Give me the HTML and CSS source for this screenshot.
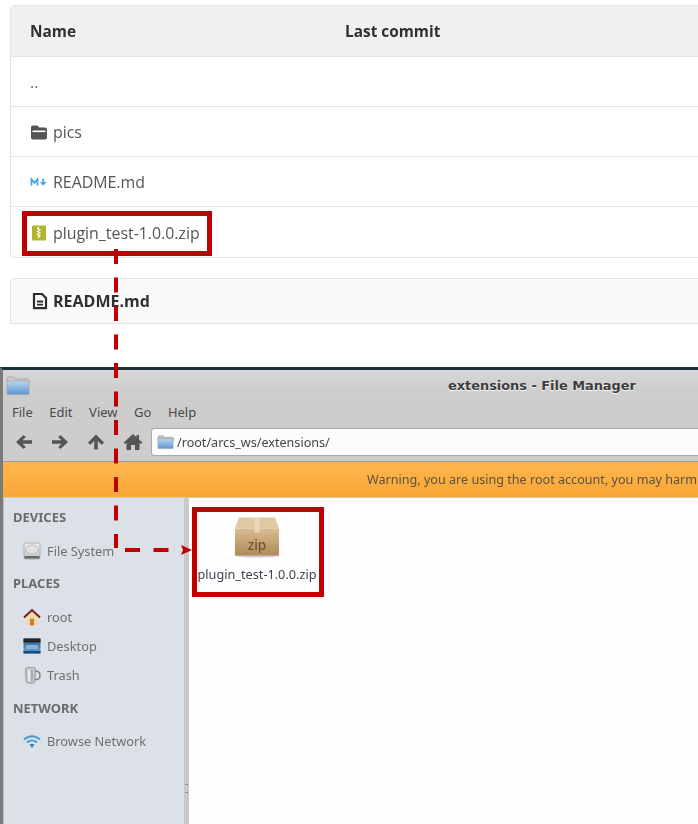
FILE: index.html
```html
<!DOCTYPE html>
<html lang="en">
<head>
<meta charset="utf-8">
<title>extensions - File Manager</title>
<link rel="stylesheet" href="styles.css">
</head>
<body>
<svg width="0" height="0" class="defs">
  <defs>
    <linearGradient id="gFolder" x1="0" y1="0" x2="0" y2="1"><stop offset="0" stop-color="#b9d6ee"/><stop offset="1" stop-color="#5b97cf"/></linearGradient>
    <linearGradient id="gBox" x1="0" y1="0" x2="0" y2="1"><stop offset="0" stop-color="#d9bd92"/><stop offset="1" stop-color="#ad8a58"/></linearGradient>
    <linearGradient id="gDisk" x1="0" y1="0" x2="0" y2="1"><stop offset="0" stop-color="#eeeeee"/><stop offset="1" stop-color="#c2c2c2"/></linearGradient>
    <linearGradient id="gScreen" x1="0" y1="0" x2="0" y2="1"><stop offset="0" stop-color="#2f5f92"/><stop offset="1" stop-color="#6ea0cf"/></linearGradient>
  </defs>
</svg>

<section class="repo">
  <div class="table">
    <div class="row head"><span class="col-name">Name</span><span>Last commit</span></div>
    <div class="row"><span class="col-name up">..</span></div>
    <div class="row">
      <span class="col-name file">
        <svg class="ficon" viewBox="0 0 18 18"><path fill="#555" d="M1 4.500C1 3.400 1.800 2.500 3 2.500h4.200l2 2H15c1.200 0 2 .9 2 2v8c0 1.100-.8 2-2 2H3c-1.200 0-2-.9-2-2z"/><rect x="2.500" y="7.500" width="13" height="1.600" fill="#fff"/></svg>
        pics
      </span>
    </div>
    <div class="row">
      <span class="col-name file">
        <svg class="ficon" viewBox="0 0 18 18"><path fill="none" stroke="#42a5f5" stroke-width="1.800" d="M1.500 12.500V6.500l3 3.400 3-3.400v6"/><path fill="#42a5f5" d="M12.300 5.500h1.800v3.500h2.500l-3.400 3.800-3.400-3.800h2.500z"/></svg>
        README.md
      </span>
    </div>
    <div class="row last">
      <span class="col-name file">
        <svg class="ficon" viewBox="0 0 18 18"><rect x="2" y="1.500" width="14" height="15" rx="1" fill="#afb42b"/><path fill="none" stroke="#fff" stroke-width="1.300" d="M9 3 7.500 4.500 10 6 7.500 7.500 10 9 7.500 10.500 10 12 8 14"/></svg>
        plugin_test-1.0.0.zip
      </span>
    </div>
  </div>
  <div class="readme">
    <svg class="ficon" viewBox="0 0 18 18"><path fill="none" stroke="#2c2c2c" stroke-width="2.200" d="M3 2h8l4 4v10.200H3z"/><path fill="none" stroke="#2c2c2c" stroke-width="1.800" d="M6 9.500h6M6 12.700h6"/></svg>
    README.md
  </div>
</section>

<section class="window">
  <div class="chrome">
    <div class="titlebar">
      <svg class="appicon" viewBox="0 0 24 22"><path fill="#c9c9c9" stroke="#9a9a9a" stroke-width=".7" d="M1 5c0-1 .6-2 2-2h5l2 2h11c1 0 2 .7 2 2v2H1z"/><rect x="1" y="7" width="22" height="13.500" rx="1" fill="url(#gFolder)" stroke="#9aa5b0" stroke-width=".7"/></svg>
      <span class="wintitle">extensions - File Manager</span>
    </div>
    <nav class="menubar">
      <span>File</span><span>Edit</span><span>View</span><span>Go</span><span>Help</span>
    </nav>
    <div class="toolbar">
      <svg class="tool" viewBox="0 0 18 18"><path fill="#555" d="M1 9 8.500 2 10.800 4 7.500 7.200H17v3.600H7.500l3.300 3.200-2.300 2z"/></svg>
      <svg class="tool" viewBox="0 0 18 18"><path fill="#555" d="M17 9 9.500 2 7.200 4l3.300 3.200H1v3.600h9.500L7.200 14l2.300 2z"/></svg>
      <svg class="tool" viewBox="0 0 18 18"><path fill="#555" d="M9 1.500 1 9.500 3.300 11.700 7.200 8V16.500h3.600V8l3.900 3.700L17 9.500z"/></svg>
      <svg class="tool home" viewBox="0 0 20 18"><path fill="#555" d="M10 1 0.500 9.800 2 11l1.500-1.200V17H8v-5h4v5h4.500V9.800L18 11l1.500-1.200L16 6.500V2h-2.500v2.200z"/></svg>
      <div class="pathbar">
        <svg class="pathicon" viewBox="0 0 18 16"><path fill="#bdbdbd" stroke="#8b8b8b" stroke-width=".5" d="M1 3c0-.8.500-1.500 1.500-1.500h4l1.500 1.500h8c.8 0 1.500.5 1.500 1.500V7H1z"/><rect x="1" y="4.500" width="16" height="10.500" rx="1" fill="url(#gFolder)" stroke="#8f9aa5" stroke-width=".5"/></svg>
        <span>/root/arcs_ws/extensions/</span>
      </div>
    </div>
  </div>
  <div class="warning"><span>Warning, you are using the root account, you may harm</span></div>
  <div class="panes">
    <aside class="sidebar">
      <div class="group">
        <h3>DEVICES</h3>
        <div class="item">
          <svg class="sicon" viewBox="0 0 18 18"><rect x="1" y="1" width="16" height="16" rx="2" fill="url(#gDisk)" stroke="#8d8d8d" stroke-width=".6"/><ellipse cx="9" cy="7.500" rx="6" ry="4.500" fill="#e2e2e2" stroke="#a5a5a5" stroke-width=".6"/><rect x="1.500" y="14" width="15" height="2.500" fill="#6a6a6a"/></svg>
          File System
        </div>
      </div>
      <div class="group">
        <h3>PLACES</h3>
        <div class="item">
          <svg class="sicon" viewBox="0 0 18 18"><path fill="#efd9ab" d="M3.500 8 9 3.500 14.500 8v9.500h-11z"/><path fill="none" stroke="#6f1f1a" stroke-width="2" d="M1 9.500 9 2l8 7.500"/><rect x="7" y="10.500" width="4" height="7" rx="1" fill="#c9792c"/></svg>
          root
        </div>
        <div class="item">
          <svg class="sicon" viewBox="0 0 18 18"><rect x="0.500" y="1.500" width="17" height="15" rx="1" fill="url(#gScreen)"/><rect x="0.500" y="1.500" width="17" height="4" fill="#23272d"/><rect x="3" y="8" width="12" height="4" fill="#8db4d8"/><rect x="0.500" y="14" width="17" height="2.500" fill="#1f4a78"/></svg>
          Desktop
        </div>
        <div class="item">
          <svg class="sicon" viewBox="0 0 18 18"><path fill="none" stroke="#7f8589" stroke-width="1.500" d="M12 5.500c4-1 5 1.500 5 4s-1.500 5-5 3.500"/><path fill="#c9ccce" stroke="#7f8589" stroke-width=".8" d="M2.500 3c0-2 10-2 10 0l-.8 13c0 1.500-8.400 1.500-8.400 0z"/><path stroke="#f4f4f4" stroke-width="1.500" d="M6 4v11"/><path stroke="#8b9094" stroke-width="1" d="M9 4v11"/></svg>
          Trash
        </div>
      </div>
      <div class="group net">
        <h3>NETWORK</h3>
        <div class="item">
          <svg class="sicon" viewBox="0 0 18 18"><path fill="none" stroke="#4a9be0" stroke-width="2" d="M1 7.500C5.500 3 12.500 3 17 7.500M4 10.500c3-2.800 7-2.800 10 0"/><path fill="#2d7fc9" d="M6.500 12.500c1.500-1 3.500-1 5 0L9 16z"/></svg>
          Browse Network
        </div>
      </div>
    </aside>
    <div class="splitter"><i></i></div>
    <main class="content">
      <figure class="zipfile">
        <svg class="zipicon" viewBox="0 0 46 42">
          <ellipse cx="23" cy="39.500" rx="23" ry="2" fill="#cfcfcf"/>
          <path fill="#e0c8a2" d="M5 1.500h36l4 11H1z"/>
          <path fill="url(#gBox)" d="M1 12.500h44V38c0 .8-.7 1.500-1.500 1.500h-41C1.700 39.500 1 38.800 1 38z"/>
          <rect x="20.500" y="1.500" width="5" height="15" fill="#e7d6ba"/>
        </svg>
        <span class="zipmark">zip</span>
        <figcaption>plugin_test-1.0.0.zip</figcaption>
      </figure>
    </main>
  </div>
</section>

<svg class="callouts" width="698" height="824" viewBox="0 0 698 824">
  <g fill="none" stroke="#c00000">
    <rect x="24.500" y="213.500" width="185" height="40" stroke-width="5"/>
    <rect x="194.500" y="509.500" width="127" height="85" stroke-width="5"/>
    <path d="M116 249V548" stroke-width="4" stroke-dasharray="15 13.500"/>
    <path d="M125 550H182" stroke-width="4" stroke-dasharray="15 13.500"/>
  </g>
  <path d="M181 545 192 550 181 555 183 550z" fill="#c00000"/>
</svg>
</body>
</html>
```

FILE: styles.css
```css
html, body {
  margin: 0;
  padding: 0;
  height: 824px;
  overflow: hidden;
  background: #fff;
}

body {
  position: relative;
  width: 698px;
  font-family: "Open Sans", "Noto Sans", sans-serif;
}

.defs { position: absolute; }

/* top: repository listing */
.repo {
  box-sizing: border-box;
  height: 367px;
  padding: 5px 0 0 10px;
  overflow: hidden;
  filter: blur(.35px);
}

.table {
  width: 720px;
  box-sizing: border-box;
  border: 1px solid #e3e3e3;
  border-radius: 4px;
  overflow: hidden;
}

.row {
  display: flex;
  align-items: center;
  height: 50px;
  padding-top: 1px;
  box-sizing: border-box;
  border-bottom: 1px solid #e3e3e3;
  font-size: 15.900px;
  color: #555;
}

.row.head {
  height: 51px;
  background: #f0f0f0;
  color: #303030;
  font-weight: 700;
  font-size: 15.400px;
}

.row.last {
  height: 50px;
  border-bottom: 0;
}

.col-name {
  width: 315px;
  padding-left: 19px;
  box-sizing: content-box;
}

.col-name.up { color: #707070; }

.file {
  display: flex;
  align-items: center;
  gap: 5px;
}

.ficon {
  width: 18px;
  height: 18px;
  flex: none;
}

.readme {
  display: flex;
  align-items: center;
  gap: 4px;
  width: 720px;
  height: 46px;
  margin-top: 20px;
  padding-left: 20px;
  box-sizing: border-box;
  background: #fafafa;
  border: 1px solid #e3e3e3;
  border-radius: 4px 0 0 0;
  font-size: 16px;
  font-weight: 700;
  color: #303030;
}

/* bottom: file manager */
.window {
  height: 457px;
  border-top: 3px solid #1e3338;
  box-sizing: border-box;
  display: flex;
  flex-direction: column;
  font-family: "Noto Sans", "Open Sans", sans-serif;
  border-left: 3px solid #7a7a7a;
  overflow: hidden;
  filter: blur(.35px);
}

.chrome {
  background: linear-gradient(#d6d6d6 0, #cdcdcd 24px);
  height: 92px;
  flex: none;
  display: flex;
  flex-direction: column;
  border-bottom: 1px solid #9a9a9a;
  box-sizing: border-box;
}

.titlebar {
  display: flex;
  align-items: center;
  height: 30px;
  flex: none;
  padding-left: 3px;
  position: relative;
}

.appicon {
  width: 24px;
  height: 22px;
}

.wintitle {
  margin-left: 418px;
  font: 700 12.900px "DejaVu Sans", sans-serif;
  color: #3d3d3d;
  text-shadow: 0 1px 1px #fff;
  white-space: nowrap;
}

.menubar {
  display: flex;
  height: 24px;
  flex: none;
  align-items: center;
  padding-left: 9px;
  gap: 16.500px;
  font-size: 13px;
  color: #4a4a4a;
}

.toolbar {
  display: flex;
  align-items: center;
  flex: 1;
  padding-left: 12px;
  padding-bottom: 1px;
}

.tool {
  width: 18px;
  height: 18px;
  flex: none;
  margin-right: 18px;
}

.tool.home {
  width: 20px;
  margin-right: 8px;
}

.pathbar {
  flex: 1;
  height: 26px;
  display: flex;
  align-items: center;
  gap: 3px;
  padding-left: 5px;
  background: #fcfcfc;
  border: 1px solid #a9a9a9;
  border-right: 0;
  border-radius: 3px 0 0 3px;
  font-size: 12.600px;
  color: #444;
}

.pathicon {
  width: 17px;
  height: 16px;
}

.warning {
  height: 36px;
  flex: none;
  display: flex;
  align-items: center;
  padding-left: 364px;
  background: linear-gradient(#ffb64d, #f9a637);
  border-bottom: 1px solid #c9c9c9;
  box-sizing: border-box;
  font-size: 12.600px;
  color: #5a5340;
  white-space: nowrap;
}

.panes {
  flex: 1;
  display: flex;
  min-height: 0;
}

.sidebar {
  width: 181px;
  flex: none;
  background: #dce1e8;
  padding-top: 5px;
  box-sizing: border-box;
  border-left: 1px solid #bdbdbd;
}

.group { padding-bottom: 4px; }

.group h3 {
  margin: 0 0 4px;
  height: 29px;
  line-height: 29px;
  padding-left: 9px;
  font-size: 13px;
  font-weight: 700;
  color: #6b6b6b;
}

.group.net { padding-top: 1px; }

.group.net h3 { margin-bottom: 3px; }

.item {
  display: flex;
  align-items: center;
  gap: 6px;
  height: 29px;
  padding-left: 19px;
  font-size: 12.800px;
  color: #707070;
}

.sicon {
  width: 18px;
  height: 18px;
  flex: none;
}

.splitter {
  width: 5px;
  flex: none;
  background: #c9c9c9;
  display: flex;
  align-items: center;
  justify-content: center;
}

.splitter i {
  display: block;
  width: 3px;
  height: 7px;
  border-top: 1px solid #8e8e8e;
  border-bottom: 1px solid #8e8e8e;
  margin-top: 254px;
}

.content {
  flex: 1;
  background: #fefefe;
}

.zipfile {
  margin: 18px 0 0 9px;
  width: 118px;
  display: flex;
  flex-direction: column;
  align-items: center;
  position: relative;
}

.zipicon {
  width: 46px;
  height: 42px;
}

.zipmark {
  position: absolute;
  top: 20px;
  left: 0;
  right: 0;
  text-align: center;
  font-size: 13.500px;
  font-weight: 500;
  color: #6e5433;
}

.zipfile figcaption {
  margin-top: 7px;
  font-size: 12.700px;
  color: #3d4450;
  white-space: nowrap;
}

/* annotation layer drawn on top of the screenshot */
.callouts {
  position: absolute;
  left: 0;
  top: 0;
  pointer-events: none;
}
```
